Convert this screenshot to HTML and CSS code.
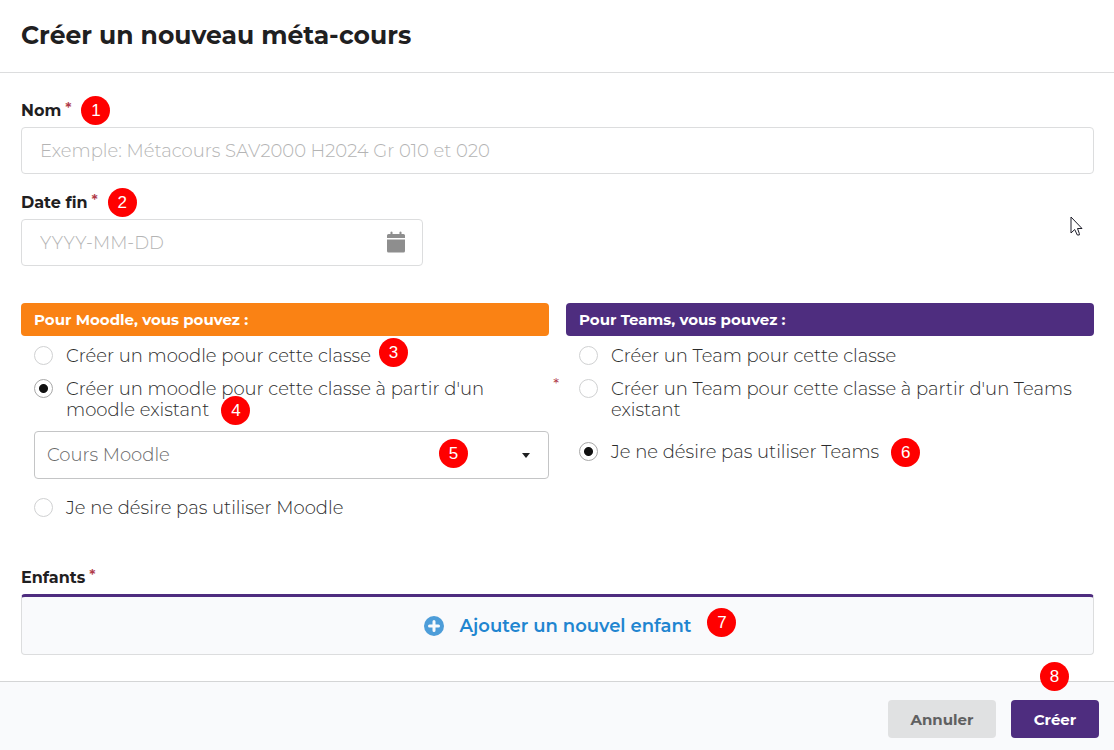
FILE: index.html
```html
<!DOCTYPE html>
<html lang="fr">
<head>
    <meta charset="UTF-8">
    <meta name="viewport" content="width=device-width, initial-scale=1.0">
    <title>Créer un nouveau méta-cours</title>
    <link rel="stylesheet" href="styles.css">
</head>
<body>
    <form class="modal">
        <header class="modal-header">
            <h1>Créer un nouveau méta-cours</h1>
        </header>

        <main class="modal-body">
            <div class="field">
                <div class="field-label">
                    <label for="nom">Nom</label>
                    <span class="required">*</span>
                    <span class="step">1</span>
                </div>
                <input type="text" id="nom" class="text-input" placeholder="Exemple: Métacours SAV2000 H2024 Gr 010 et 020">
            </div>

            <div class="field">
                <div class="field-label">
                    <label for="dateFin">Date fin</label>
                    <span class="required">*</span>
                    <span class="step">2</span>
                </div>
                <div class="date-input">
                    <input type="text" id="dateFin" class="text-input" placeholder="YYYY-MM-DD">
                    <svg class="calendar" viewBox="0 0 20 22" aria-hidden="true">
                        <path d="M1 7V4.500Q1 3 2.500 3H4.500V1Q5.500 .2 6.500 1V3H13.500V1Q14.500 .2 15.500 1V3H17.500Q19 3 19 4.500V7Z"/>
                        <path d="M1 8.500H19V20Q19 21.500 17.500 21.500H2.500Q1 21.500 1 20Z"/>
                    </svg>
                </div>
                <svg class="cursor" viewBox="0 0 13 20" aria-hidden="true">
                    <path d="M1 1V17L4.700 13.500L7.300 19H9.300V17.500L7.500 12.500H12Z"/>
                </svg>
            </div>

            <div class="columns">
                <section class="column">
                    <h2 class="moodle">Pour Moodle, vous pouvez :</h2>
                    <div class="options">
                        <div class="option">
                            <input type="radio" name="moodle" id="moodle1">
                            <label for="moodle1">Créer un moodle pour cette classe<span class="step step-high">3</span></label>
                        </div>
                        <div class="option">
                            <input type="radio" name="moodle" id="moodle2" checked>
                            <label for="moodle2">Créer un moodle pour cette classe à partir d'un moodle existant<span class="step">4</span></label>
                            <span class="required option-required">*</span>
                        </div>
                        <div class="course">
                            <select aria-label="Cours Moodle">
                                <option>Cours Moodle</option>
                            </select>
                            <svg class="caret" viewBox="0 0 8 5" aria-hidden="true"><path d="M0 0H8L4 5Z"/></svg>
                            <span class="step">5</span>
                        </div>
                        <div class="option option-last">
                            <input type="radio" name="moodle" id="moodle3">
                            <label for="moodle3">Je ne désire pas utiliser Moodle</label>
                        </div>
                    </div>
                </section>

                <section class="column">
                    <h2 class="teams">Pour Teams, vous pouvez :</h2>
                    <div class="options">
                        <div class="option">
                            <input type="radio" name="teams" id="teams1">
                            <label for="teams1">Créer un Team pour cette classe</label>
                        </div>
                        <div class="option">
                            <input type="radio" name="teams" id="teams2">
                            <label for="teams2">Créer un Team pour cette classe à partir d'un Teams existant</label>
                        </div>
                        <div class="option option-last">
                            <input type="radio" name="teams" id="teams3" checked>
                            <label for="teams3">Je ne désire pas utiliser Teams<span class="step">6</span></label>
                        </div>
                    </div>
                </section>
            </div>

            <div class="field">
                <div class="field-label">
                    <span id="enfants">Enfants</span>
                    <span class="required">*</span>
                </div>
                <button type="button" class="add-child" aria-describedby="enfants">
                    <svg class="plus" viewBox="0 0 20 20" aria-hidden="true">
                        <circle cx="10" cy="10" r="10"/>
                        <path d="M10 5.500V14.500M5.500 10H14.500"/>
                    </svg>
                    <span>Ajouter un nouvel enfant<span class="step step-high">7</span></span>
                </button>
            </div>
        </main>

        <footer class="modal-footer">
            <button type="button" class="btn cancel">Annuler</button>
            <button type="submit" class="btn create">Créer<span class="step">8</span></button>
        </footer>
    </form>
</body>
</html>
```
FILE: styles.css
```css
* {
    box-sizing: border-box;
}

body {
    margin: 0;
    background: #fff;
    color: #1f2021;
    font-family: Montserrat, Inter, sans-serif;
    font-size: 18px;
    line-height: 21px;
}

input, select, button {
    font: inherit;
}

.modal {
    display: flex;
    flex-direction: column;
    min-height: 100vh;
}

.modal-header {
    padding: 19px 21px 21px;
    border-bottom: 1px solid #dcddde;
}

.modal-header h1 {
    margin: 0;
    font-size: 25px;
    line-height: 32px;
    font-weight: 700;
}

.modal-body {
    padding: 20px 20px 26px 21px;
}

.field {
    position: relative;
    margin-bottom: 11px;
}

.field:last-child {
    margin-bottom: 0;
}

.field-label {
    display: flex;
    align-items: center;
    gap: 4px;
    height: 34px;
    font-size: 16px;
    font-weight: 700;
}

.required {
    align-self: flex-start;
    padding-top: 4px;
    color: #b03a48;
    font-size: 15px;
    font-weight: 600;
}

/* numbered markers */
.step {
    width: 29px;
    height: 29px;
    padding: 4px 0;
    border-radius: 50%;
    background: #f00;
    color: #fff;
    font-family: "Liberation Sans", Arial, sans-serif;
    font-size: 17px;
    font-weight: 400;
    line-height: 21px;
    text-align: center;
}

.field-label .step {
    margin-left: 6px;
}

.text-input {
    display: block;
    width: 100%;
    height: 47px;
    padding: 0 18px;
    border: 1px solid #dcddde;
    border-radius: 4px;
    background: #fff;
    color: #1f2021;
    font-weight: 300;
}

.text-input::placeholder {
    color: #b4b4b4;
    opacity: 1;
}

.date-input {
    position: relative;
    max-width: 402px;
}

.calendar {
    position: absolute;
    top: 12px;
    right: 17px;
    width: 20px;
    height: 22px;
    fill: #8e8e8e;
}

.cursor {
    position: absolute;
    right: 11px;
    bottom: 30px;
    width: 13px;
    height: 20px;
    fill: #fff;
    stroke: #1c1c28;
}

.columns {
    display: grid;
    grid-template-columns: 1fr 1fr;
    gap: 17px;
    margin-top: 37px;
    margin-bottom: 41px;
}

.column h2 {
    margin: 0;
    padding: 6px 13px;
    border-radius: 4px;
    color: #fff;
    font-size: 15px;
    line-height: 21px;
    font-weight: 700;
}

.moodle {
    background: #fa8214;
}

.teams {
    background: #4e2d7f;
}

.options {
    padding: 10px 0 0 13px;
}

.option {
    position: relative;
    display: flex;
    gap: 13px;
    margin-bottom: 12px;
    padding-right: 20px;
    color: #2c2c2c;
    font-weight: 300;
}

.option-last {
    margin-top: 21px;
    margin-bottom: 0;
}

.option input {
    flex: none;
    appearance: none;
    width: 19px;
    height: 19px;
    margin: 0;
    border: 1px solid #d0d1d2;
    border-radius: 50%;
    background: #fff;
}

.option input:checked {
    border-color: #a8a8a8;
    background: radial-gradient(circle, #111 4px, #fff 5px);
}

/* no offsets: the marker sits right after the last word */
.option .step,
.add-child .step {
    position: absolute;
    margin: -4px 0 0 12px;
}

.option .step-high {
    margin: -8px 0 0 8px;
}

.option-required {
    position: absolute;
    top: -6px;
    right: -10px;
    padding: 0;
    font-weight: 400;
}

.course {
    position: relative;
    margin-top: -2px;
    margin-bottom: -2px;
}

.course select {
    display: block;
    appearance: none;
    width: 100%;
    height: 48px;
    padding: 0 12px;
    border: 1px solid #c4c5c6;
    border-radius: 4px;
    background: #fff;
    color: #686868;
    font-weight: 300;
}

.course .caret {
    position: absolute;
    top: 22px;
    right: 19px;
    width: 8px;
    height: 5px;
    fill: #1f2021;
}

.course .step {
    position: absolute;
    top: 8px;
    right: 81px;
}

.add-child {
    display: flex;
    align-items: center;
    justify-content: center;
    gap: 16px;
    width: 100%;
    height: 61px;
    padding: 2px 0 0;
    border: 1px solid #dcddde;
    border-top: 3px solid #4e2d7f;
    border-radius: 4px;
    background: #f9fafc;
    color: #2185d0;
    font-weight: 600;
    cursor: pointer;
}

.plus {
    width: 20px;
    height: 20px;
    margin-bottom: 2px;
    fill: #4d9dd9;
    stroke: #f9fafc;
    stroke-width: 3;
    stroke-linecap: round;
}

.plus circle {
    stroke: none;
}

.add-child .step-high {
    margin: -8px 0 0 16px;
}

.modal-footer {
    display: flex;
    flex: 1;
    align-items: flex-start;
    justify-content: flex-end;
    gap: 15px;
    padding: 18px 15px 12px;
    border-top: 1px solid #d4d5d6;
    background: #f9fafc;
}

.btn {
    position: relative;
    min-width: 88px;
    height: 38px;
    padding: 0 20px;
    border: none;
    border-radius: 4px;
    font-size: 15px;
    font-weight: 700;
    cursor: pointer;
}

.cancel {
    min-width: 108px;
    background: #e0e1e2;
    color: #5f6061;
}

.create {
    background: #4e2d7f;
    color: #fff;
}

.create .step {
    position: absolute;
    top: -38px;
    left: 29px;
}
```
